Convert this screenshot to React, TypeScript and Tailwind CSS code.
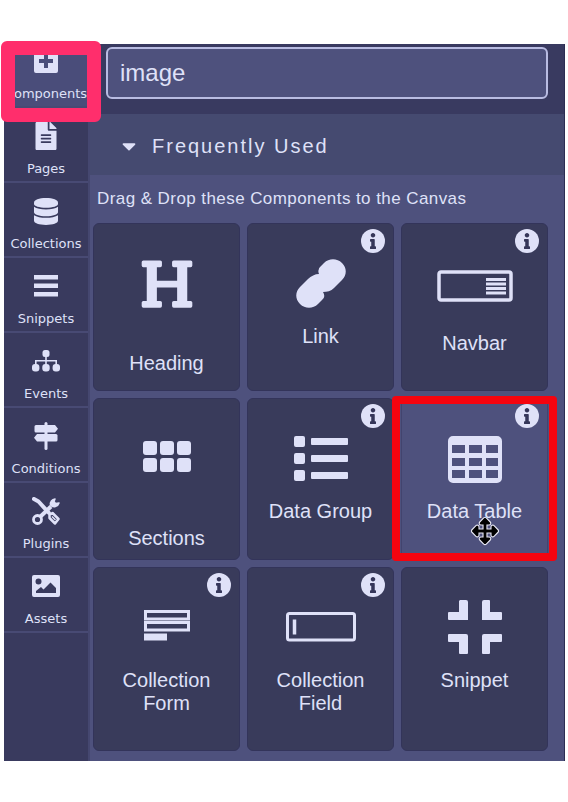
import { useState } from "react";
import type { ReactNode } from "react";
import { FaArrowsAlt, FaCaretDown, FaFileAlt, FaHeading, FaInfo } from "react-icons/fa";

const navItems: { label: string; icon: ReactNode }[] = [
  {
    label: "Components",
    icon: (
      <svg width="24" height="24" viewBox="0 0 24 24" fill="currentColor" fillRule="evenodd">
        <path d="M2 0h20a2 2 0 0 1 2 2v20a2 2 0 0 1-2 2H2a2 2 0 0 1-2-2V2a2 2 0 0 1 2-2zM10 5v5H5v4h5v5h4v-5h5v-4h-5V5z" />
      </svg>
    ),
  },
  { label: "Pages", icon: <FaFileAlt size={28} /> },
  {
    label: "Collections",
    icon: (
      <svg width="24" height="27" viewBox="0 0 24 27" fill="currentColor">
        <path d="M0 4.500C0 2 5 0 12 0s12 2 12 4.500v1.500c0 2-5 3.800-12 3.800S0 8 0 6z" />
        <path d="M0 8.800c2.500 1.700 7 2.600 12 2.600s9.500-.9 12-2.600v5.400c0 2.200-5 4-12 4s-12-1.800-12-4z" />
        <path d="M0 17.200c2.500 1.700 7 2.600 12 2.600s9.500-.9 12-2.600v5.600c0 2.300-5 4.200-12 4.200S0 25.100 0 22.800z" />
      </svg>
    ),
  },
  {
    label: "Snippets",
    icon: (
      <svg width="24" height="22" viewBox="0 0 24 22" fill="currentColor">
        <path d="M0 0h24v4.500H0zM0 8.500h24V13H0zM0 17h24v4.500H0z" />
      </svg>
    ),
  },
  {
    label: "Events",
    icon: (
      <svg width="28" height="22" viewBox="0 0 28 22" fill="currentColor">
        <rect x="10.500" y="0" width="7" height="7" rx="2.500" />
        <path d="M13.200 6h1.600v4H25v5h-1.600v-3.400h-8.600V15h-1.600v-3.400H4.600V15H3v-5h10.200z" />
        <rect x="0" y="14" width="7.400" height="7.400" rx="3" />
        <rect x="10.300" y="14" width="7.400" height="7.400" rx="3" />
        <rect x="20.600" y="14" width="7.400" height="7.400" rx="3" />
      </svg>
    ),
  },
  {
    label: "Conditions",
    icon: (
      <svg width="26" height="28" viewBox="0 0 26 28" fill="currentColor">
        <path d="M11.500 1.500a1.500 1.500 0 0 1 3 0v25a1.500 1.500 0 0 1-3 0z" />
        <path d="M3 3h19l3 3.700-3 3.700H3a1.500 1.500 0 0 1-1.500-1.500V4.500A1.500 1.500 0 0 1 3 3z" />
        <path d="M23 12H4l-3 3.700 3 3.700h19a1.500 1.500 0 0 0 1.500-1.500v-4.400A1.500 1.500 0 0 0 23 12z" />
      </svg>
    ),
  },
  {
    label: "Plugins",
    icon: (
      <svg width="28" height="28" viewBox="0 0 28 28" fill="none" stroke="currentColor">
        <path d="M2 2l4.500 2.500L17 16" strokeWidth="4" strokeLinejoin="round" strokeLinecap="round" />
        <path d="M17.500 18l3-2 6 6-3.500 4.500-5.500-5.500z" strokeWidth="2.500" strokeLinejoin="round" />
        <path d="M20 19.500l3.500 3.500" strokeWidth="1.500" />
        <path d="M8.500 19.500L19 9.500" strokeWidth="4" />
        <path d="M23 2a5 5 0 0 0-4.500 6 5 5 0 0 0 8.500-2l-3.500 0.500-1.500-2z" fill="currentColor" strokeWidth="1.500" strokeLinejoin="round" />
        <circle cx="5.500" cy="22.500" r="4" strokeWidth="2.800" />
      </svg>
    ),
  },
  {
    label: "Assets",
    icon: (
      <svg width="28" height="22" viewBox="0 0 28 22" fill="currentColor" fillRule="evenodd">
        <path d="M2 0h24a2 2 0 0 1 2 2v18a2 2 0 0 1-2 2H2a2 2 0 0 1-2-2V2a2 2 0 0 1 2-2zM6.500 3.500a3 3 0 1 0 0 6 3 3 0 0 0 0-6zM4 18h20v-5l-5.500-5.500-7 7L9 12l-5 4z" />
      </svg>
    ),
  },
];

type Component = { label: string; icon: ReactNode; gap?: string; info?: boolean };

const components: Component[] = [
  { label: "Heading", gap: "mt-10", icon: <FaHeading size={54} /> },
  {
    label: "Link",
    info: true,
    icon: (
      <svg width="50" height="50" viewBox="0 0 50 50" fill="currentColor">
        <path d="M23 15Q21 10 25 7l3-3c5-5 13-5 18 0s5 12 0 17l-8 8c-3 3-7 4-11 4q3 5-1 8l-4 4c-5 5-13 5-18 0s-5-12 0-17l8-8c3-3 7-5 11-5z" />
      </svg>
    ),
  },
  {
    label: "Navbar",
    gap: "mt-5",
    info: true,
    icon: (
      <svg width="76" height="36" viewBox="0 -4 76 36" fill="currentColor">
        <rect x="2" y="2" width="72" height="28" rx="2" fill="none" stroke="currentColor" strokeWidth="3.500" />
        <path d="M49 8h20v3H49zM49 12.500h20v3H49zM49 17h20v3H49zM49 21.500h20v3H49z" />
      </svg>
    ),
  },
  {
    label: "Sections",
    gap: "mt-10",
    icon: (
      <svg width="48" height="36" viewBox="0 0 48 36" fill="currentColor">
        {[0, 17, 34].map(x => [0, 17].map(y => <rect key={`${x}-${y}`} x={x} y={y} width="14" height="14" rx="3" />))}
      </svg>
    ),
  },
  {
    label: "Data Group",
    info: true,
    icon: (
      <svg width="54" height="46" viewBox="0 0 54 46" fill="currentColor">
        {[0, 17, 34].map(y => (
          <g key={y}>
            <rect x="0" y={y} width="11" height="11" rx="2" />
            <rect x="17" y={y + 2} width="37" height="7" rx="1" />
          </g>
        ))}
      </svg>
    ),
  },
  {
    label: "Data Table",
    info: true,
    icon: (
      <svg width="54" height="47" viewBox="0 0 54 47" fill="currentColor" fillRule="evenodd">
        <path d="M5 0h44a5 5 0 0 1 5 5v37a5 5 0 0 1-5 5H5a5 5 0 0 1-5-5V5a5 5 0 0 1 5-5zM4 9v8h13V9zM21 9v8h13V9zM38 9v8h12V9zM4 22v8h13v-8zM21 22v8h13v-8zM38 22v8h12v-8zM4 34v8h13v-8zM21 34v8h13v-8zM38 34v8h12v-8z" />
      </svg>
    ),
  },
  {
    label: "Collection Form",
    info: true,
    icon: (
      <svg width="46" height="36" viewBox="0 0 46 36" fill="none" stroke="currentColor" strokeWidth="3">
        <rect x="1.500" y="1.500" width="43" height="7.500" />
        <rect x="1.500" y="12.500" width="43" height="7.500" />
        <rect x="0" y="23.500" width="23" height="7" fill="currentColor" stroke="none" />
      </svg>
    ),
  },
  {
    label: "Collection Field",
    info: true,
    icon: (
      <svg width="70" height="32" viewBox="0 0 70 32" fill="none" stroke="currentColor">
        <rect x="1.500" y="1.500" width="67" height="26.500" rx="2" strokeWidth="3" />
        <path d="M8.500 7.500v15" strokeWidth="3.500" />
      </svg>
    ),
  },
  {
    label: "Snippet",
    icon: (
      <svg width="54" height="58" viewBox="0 0 54 58" fill="currentColor">
        <path d="M12 1h6a2 2 0 0 1 2 2v18H1a1 1 0 0 1-1-1v-6a1 1 0 0 1 1-1h10V2zM36 1h5a1 1 0 0 1 1 1v11h11a1 1 0 0 1 1 1v6a1 1 0 0 1-1 1H34V3a2 2 0 0 1 2-2zM1 35h17a2 2 0 0 1 2 2v17a1 1 0 0 1-1 1h-7a1 1 0 0 1-1-1V43H1a1 1 0 0 1-1-1v-6a1 1 0 0 1 1-1zM36 35h17a1 1 0 0 1 1 1v6a1 1 0 0 1-1 1H42v11a1 1 0 0 1-1 1h-6a1 1 0 0 1-1-1V37a2 2 0 0 1 2-2z" />
      </svg>
    ),
  },
];

function ComponentTile({ item, active }: { item: Component; active: boolean }) {
  return (
    <li
      draggable
      className={`relative flex cursor-move flex-col items-center rounded-md border px-4 ${active ? "border-[#42446f] bg-[#4e517d]" : "border-[#33345a] bg-[#393b5b]"}`}
    >
      <div className="mt-8 flex h-14 items-center justify-center">{item.icon}</div>
      <p className={`text-center text-[20px] leading-[23px] ${item.gap || "mt-[13px]"}`}>{item.label}</p>
      {item.info && (
        <button
          aria-label={`About ${item.label}`}
          className="absolute top-[5px] right-2 flex size-6 items-center justify-center rounded-full bg-[#dfe1f8] text-[#35365a]"
        >
          <FaInfo size={16} />
        </button>
      )}
      {active && (
        <>
          {/* drag cursor */}
          <FaArrowsAlt
            size={26}
            className="absolute top-[119px] left-[70px] overflow-visible text-black"
            stroke="#e8e8f4"
            strokeWidth={44}
            style={{ paintOrder: "stroke" }}
          />
          {/* highlight */}
          <div className="pointer-events-none absolute -top-[3px] -right-[10px] -bottom-[2px] -left-[10px] rounded border-8 border-[#f5040f]" />
        </>
      )}
    </li>
  );
}

export default function App() {
  const [search, setSearch] = useState("image");
  const [open, setOpen] = useState(true);
  const [tab, setTab] = useState("Components");

  return (
    <div className="bg-white pt-11 pr-[3px] pl-1 font-['Liberation_Sans',Arial,sans-serif] text-[#dfe1f8]">
      <div className="flex border-r border-[#2c2d52] bg-[#4e517d]">
        {/* sidebar */}
        <nav className="w-[86px] shrink-0 border-r-2 border-[#454770] bg-[#393a5e] font-['DejaVu_Sans',Verdana,sans-serif]">
          {navItems.map((item, i) => (
            <div key={item.label} className="relative">
              <button
                onClick={() => setTab(item.label)}
                className={`flex w-full flex-col items-center justify-end border-b-2 border-[#484a74] pb-1 ${i === 0 ? "h-16" : "h-[75px]"} ${tab === item.label ? "bg-[#4a4d7a]" : ""}`}
              >
                <span className="flex h-7 items-center">{item.icon}</span>
                <span className="mt-[11px] text-[13px] leading-4">{item.label}</span>
              </button>
              {i === 0 && (
                <div className="pointer-events-none absolute -top-[3px] -right-[13px] -left-[3px] z-10 h-[81px] rounded-md border-14 border-[#ff2e6c]" />
              )}
            </div>
          ))}
        </nav>

        <main className="min-w-0 grow">
          <div className="bg-[#393a60] px-4 pt-[3px] pb-[15px]">
            <input
              type="text"
              aria-label="Search components"
              value={search}
              onChange={e => setSearch(e.target.value)}
              className="block h-[52px] w-full rounded-md border-2 border-[#b9bce2] bg-[#4e517d] px-3 text-[24px] outline-none"
            />
          </div>

          <button
            onClick={() => setOpen(!open)}
            className="flex h-[61px] w-full items-center gap-4 bg-[#454a70] pt-0.5 pl-8 text-[20px] tracking-widest"
          >
            <FaCaretDown size={22} className="-mx-1" />
            Frequently Used
          </button>

          {open && (
            <div className="pr-4 pb-2.5 pl-[3px]">
              <p className="h-12 pl-1 text-[17px] leading-[47px] tracking-wide">Drag &amp; Drop these Components to the Canvas</p>
              <ul className="grid grid-cols-3 grid-rows-[168px_162px_184px] gap-[7px]">
                {components.map(c => (
                  <ComponentTile key={c.label} item={c} active={c.label === "Data Table"} />
                ))}
              </ul>
            </div>
          )}
        </main>
      </div>
    </div>
  );
}
